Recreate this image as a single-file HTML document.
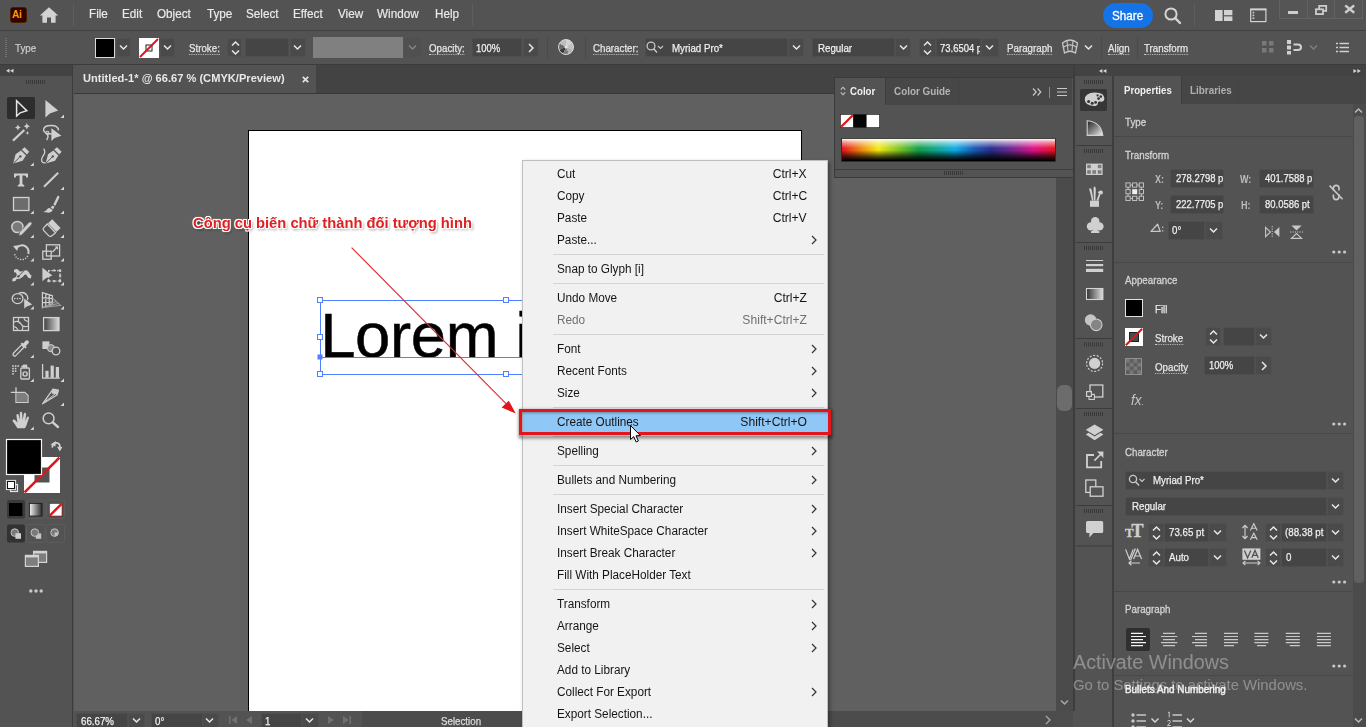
<!DOCTYPE html>
<html>
<head>
<meta charset="utf-8">
<title>Illustrator</title>
<style>
*{box-sizing:border-box;margin:0;padding:0}
html,body{width:1366px;height:727px;overflow:hidden;background:#535353;font-family:"Liberation Sans",sans-serif;font-size:11px;color:#dcdcdc}
.abs{position:absolute}
svg{display:block;overflow:visible}
#root{position:relative;width:1366px;height:727px;overflow:hidden;background:#535353}
.t{transform-origin:0 0;transform:scaleX(.885);display:inline-block}
.n{transform:scaleX(.86)}
/* menu bar */
#menubar{left:0;top:0;width:1366px;height:30px;background:#535353}
#menubar .mi{position:absolute;top:6px;font-size:13px;color:#eaeaea;-webkit-text-stroke:.2px #eaeaea;line-height:16px;white-space:nowrap;transform-origin:0 0;transform:scaleX(.9)}
/* control bar */
#ctrl{left:0;top:30px;width:1366px;height:35px;background:#535353;border-top:1px solid #404040;border-bottom:1px solid #3c3c3c}
.lbl{position:absolute;font-size:11px;color:#e6e6e6;white-space:nowrap;line-height:13px;-webkit-text-stroke:.25px #e6e6e6}
.ul{border-bottom:1px dotted #c8c8c8;line-height:12px}
.fld{position:absolute;background:#454545;border:1px solid #4d4d4d;border-radius:2px}
.fld span{position:absolute;left:5px;top:3px;font-size:11px;color:#f0f0f0;line-height:13px;white-space:nowrap;-webkit-text-stroke:.25px #f0f0f0}
.pf span{top:1.6px}
.dd{background:#4a4a4a;border:1px solid #505050;border-radius:2px}
.chev{width:9px;height:7px}
.vsep{width:1px;height:24px;background:#4b4b4b}
.hs{left:1114px;width:239px;height:1px;background:#484848}
.sec{color:#d4d4d4;-webkit-text-stroke:.3px #d4d4d4}
.b{font-weight:bold;color:#bdbdbd;-webkit-text-stroke:0;transform:scaleX(.82)}
.dots{width:15px;height:4px}
/* tab bar */
#tabbar{left:74px;top:65px;width:1001px;height:29px;background:#434343;border-bottom:1px solid #383838}
#tab{left:74px;top:65px;width:242px;height:28px;background:#535353}
/* tools */
#tools{left:0;top:65px;width:73px;height:662px;background:#535353;border-right:1px solid #3c3c3c}
#toolshdr{left:0;top:65px;width:72px;height:11px;background:#434343}
/* canvas */
#canvas{left:74px;top:94px;width:982px;height:617px;background:#606060}
#artboard{left:248px;top:130px;width:554px;height:581px;background:#fff;border:1px solid #000;border-bottom:none}
/* scrollbars */
#vscroll{left:1056px;top:94px;width:17px;height:617px;background:#4b4b4b}
#hbar{left:74px;top:711px;width:1001px;height:16px;background:#535353}
/* dock */
#dockhdr{left:1075px;top:65px;width:291px;height:11px;background:#434343}
#dock{left:1075px;top:76px;width:37px;height:651px;background:#535353}
/* properties */
#props{left:1114px;top:76px;width:252px;height:651px;background:#535353}
/* color panel */
#colorp{left:834px;top:77px;width:240px;height:101px;background:#535353;border:1px solid #3a3a3a}
/* context menu */
#ctx{left:522px;top:160px;width:306px;height:567px;background:#f1f1f1;border:1px solid #bfbfbf;border-bottom:none;box-shadow:2px 2px 4px rgba(0,0,0,.35)}
.ci{position:absolute;font-size:12px;color:#111;line-height:16px;white-space:nowrap;transform-origin:0 0;transform:scaleX(.98)}
.cs{position:absolute;font-size:12px;color:#111;line-height:16px;white-space:nowrap;transform-origin:100% 0;transform:scaleX(1.01)}
.sep{position:absolute;left:30px;right:3px;height:1px;background:#d0d0d0}
</style>
</head>
<body>
<svg width="0" height="0" style="position:absolute">
<defs>
<path id="chv" d="M1 1.5 L4.5 5 L8 1.5" fill="none" stroke="#e8e8e8" stroke-width="1.5"/>
<g id="dots" fill="#c8c8c8"><circle cx="1.8" cy="2" r="1.6"/><circle cx="7.2" cy="2" r="1.6"/><circle cx="12.6" cy="2" r="1.6"/></g>
<path id="chu" d="M1 5.5 L4.5 2 L8 5.5" fill="none" stroke="#e8e8e8" stroke-width="1.5"/>
</defs>
</svg>
<div id="root">
<div id="menubar" class="abs">
  <div class="abs" style="left:10px;top:7px;width:17px;height:16px;background:#330000;border-radius:3px;border:1px solid #4a1c00"></div>
  <div class="abs" style="left:12px;top:9px;font-size:10px;font-weight:bold;color:#ff9a00;line-height:12px;letter-spacing:-0.3px">Ai</div>
  <svg class="abs" style="left:39px;top:6px" width="20" height="18" viewBox="0 0 20 18"><path d="M10 1.2 L0.8 9.4 H3.4 V16.8 H8 V11.4 H12 V16.8 H16.6 V9.4 H19.2 Z" fill="#d2d2d2"/></svg>
  <div class="abs" style="left:73px;top:4px;width:1px;height:22px;background:#5e5e5e"></div>
  <span class="mi" style="left:89px">File</span>
  <span class="mi" style="left:122px">Edit</span>
  <span class="mi" style="left:157px">Object</span>
  <span class="mi" style="left:207px">Type</span>
  <span class="mi" style="left:246px">Select</span>
  <span class="mi" style="left:293px">Effect</span>
  <span class="mi" style="left:338px">View</span>
  <span class="mi" style="left:377px">Window</span>
  <span class="mi" style="left:435px">Help</span>
  <div class="abs" style="left:472px;top:4px;width:1px;height:22px;background:#5e5e5e"></div>
  <!-- share -->
  <div class="abs" style="left:1103px;top:3px;width:50px;height:25px;border-radius:13px;background:#1473e6"></div>
  <span class="abs" style="left:1112px;top:7.6px;font-size:13px;color:#fff;line-height:16px;transform-origin:0 0;transform:scaleX(.9);-webkit-text-stroke:.3px #fff">Share</span>
  <svg class="abs" style="left:1163px;top:6px" width="20" height="20" viewBox="0 0 20 20"><circle cx="8" cy="8" r="5.6" fill="none" stroke="#d4d4d4" stroke-width="2"/><path d="M12.2 12.2 L17 17" stroke="#d4d4d4" stroke-width="2.4" stroke-linecap="round"/></svg>
  <div class="abs" style="left:1194px;top:4px;width:1px;height:22px;background:#5e5e5e"></div>
  <!-- workspace icon -->
  <svg class="abs" style="left:1215px;top:10px" width="18" height="12" viewBox="0 0 18 12"><rect x="0" y="0" width="7.6" height="11" fill="#d2d2d2"/><rect x="9" y="0" width="8.4" height="5.2" fill="#d2d2d2"/><rect x="9" y="6.4" width="8.4" height="4.6" fill="#d2d2d2"/></svg>
  <svg class="abs" style="left:1250px;top:8px" width="17" height="15" viewBox="0 0 17 15"><rect x="0.7" y="1.2" width="15.2" height="12.4" fill="none" stroke="#d2d2d2" stroke-width="1.2"/><rect x="0.2" y="0.6" width="16.2" height="1.8" fill="#d2d2d2"/><rect x="2.6" y="3.8" width="1.6" height="1.6" fill="#d2d2d2"/><rect x="2.6" y="6.6" width="1.6" height="1.6" fill="#d2d2d2"/><rect x="2.6" y="9.4" width="1.6" height="1.6" fill="#d2d2d2"/></svg>
  <!-- window controls -->
  <div class="abs" style="left:1279px;top:-1px;width:84px;height:20px;border:1px solid #626262;background:#555"></div>
  <div class="abs" style="left:1307px;top:0;width:1px;height:18px;background:#626262"></div>
  <div class="abs" style="left:1334px;top:0;width:1px;height:18px;background:#626262"></div>
  <div class="abs" style="left:1288px;top:10.5px;width:10.4px;height:3.5px;background:#cdcdcd"></div>
  <svg class="abs" style="left:1314px;top:4px" width="14" height="12" viewBox="0 0 14 12"><rect x="5.2" y="1.9" width="7" height="5" fill="none" stroke="#cdcdcd" stroke-width="1.8"/><rect x="2" y="5.3" width="7" height="4.8" fill="#555" stroke="#cdcdcd" stroke-width="1.8"/></svg>
  <svg class="abs" style="left:1344px;top:4px" width="12" height="10" viewBox="0 0 12 10"><path d="M1.2 1.4 L10.2 8.8 M10.2 1.4 L1.2 8.8" stroke="#cdcdcd" stroke-width="2.5"/></svg>
</div>
<div id="ctrl" class="abs">
  <!-- coords relative to ctrl top=30 (border 1px included) ; use inner wrapper offset -->
  <div class="abs" style="left:0;top:-31px;width:1366px;height:0">
  <div class="abs" style="left:5px;top:38px;width:2px;height:19px;background:repeating-linear-gradient(#707070 0 1px,transparent 1px 2px)"></div>
  <span class="lbl t" style="left:15px;top:42px;color:#cfcfcf;-webkit-text-stroke:.2px #cfcfcf">Type</span>
  <!-- fill swatch -->
  <div class="abs" style="left:95px;top:38px;width:20px;height:20px;background:#000;border:1px solid #d8d8d8"></div>
  <div class="abs dd" style="left:116px;top:38px;width:15px;height:19px"></div>
  <svg class="abs chev" style="left:119px;top:44px"><use href="#chv"/></svg>
  <!-- stroke swatch -->
  <svg class="abs" style="left:139px;top:38px" width="20" height="20" viewBox="0 0 20 20"><rect x="0" y="0" width="20" height="20" fill="#fff"/><rect x="7" y="7" width="6" height="6" fill="none" stroke="#222" stroke-width="1"/><path d="M1 19 L19 1" stroke="#e0121a" stroke-width="2"/></svg>
  <div class="abs dd" style="left:160px;top:38px;width:15px;height:19px"></div>
  <svg class="abs chev" style="left:163px;top:44px"><use href="#chv"/></svg>
  <span class="lbl t ul" style="left:189px;top:42px">Stroke:</span>
  <div class="abs dd" style="left:227px;top:38px;width:15px;height:19px"></div>
  <svg class="abs chev" style="left:231px;top:40px"><use href="#chu"/></svg>
  <svg class="abs chev" style="left:231px;top:49px"><use href="#chv"/></svg>
  <div class="fld" style="left:245px;top:38px;width:44px;height:19px"></div>
  <div class="abs dd" style="left:290px;top:38px;width:16px;height:19px"></div>
  <svg class="abs chev" style="left:293px;top:44px"><use href="#chv"/></svg>
  <div class="abs" style="left:313px;top:37px;width:90px;height:21px;background:#808080"></div>
  <div class="abs dd" style="left:404px;top:38px;width:17px;height:19px;background:#505050"></div>
  <svg class="abs chev" style="left:408px;top:44px;opacity:.35"><use href="#chv"/></svg>
  <span class="lbl t ul" style="left:429px;top:42px">Opacity:</span>
  <div class="fld" style="left:472px;top:38px;width:50px;height:19px"><span class="t n" style="left:3px">100%</span></div>
  <div class="abs dd" style="left:523px;top:38px;width:16px;height:19px"></div>
  <svg class="abs" style="left:527px;top:43px" width="8" height="10" viewBox="0 0 8 10"><path d="M2 1 L6 5 L2 9" fill="none" stroke="#e6e6e6" stroke-width="1.5"/></svg>
  <div class="abs vsep" style="left:547px;top:36px"></div>
  <!-- recolor wheel -->
  <div class="abs" style="left:557.6px;top:38.8px;width:16.6px;height:16.6px;border-radius:50%;border:1px solid #dcdcdc;background:radial-gradient(circle,#e4e4e4 0 1.2px,rgba(228,228,228,0) 1.9px),conic-gradient(#d2d2d2 0deg 55deg,#c2c2c2 55deg 115deg,#b2b2b2 115deg 160deg,#7c7c7c 160deg 205deg,#3a3a3a 205deg 245deg,#6c6c6c 245deg 295deg,#bcbcbc 295deg 360deg)"></div>
  <div class="abs vsep" style="left:585px;top:36px"></div>
  <span class="lbl t ul" style="left:593px;top:42px">Character:</span>
  <div class="fld" style="left:645px;top:38px;width:143px;height:19px"><span class="t" style="left:26px">Myriad Pro*</span></div>
  <svg class="abs" style="left:646px;top:41px" width="20" height="14" viewBox="0 0 20 14"><circle cx="5" cy="5" r="3.9" fill="none" stroke="#c8c8c8" stroke-width="1.3"/><path d="M7.6 7.8 L11 11.5" stroke="#c8c8c8" stroke-width="1.5"/><path d="M12 5 L14.5 7.5 L17 5" fill="none" stroke="#c8c8c8" stroke-width="1.1"/></svg>
  <div class="abs dd" style="left:788px;top:38px;width:16px;height:19px"></div>
  <svg class="abs chev" style="left:792px;top:44px"><use href="#chv"/></svg>
  <div class="fld" style="left:812px;top:38px;width:83px;height:19px"><span class="t">Regular</span></div>
  <div class="abs dd" style="left:895px;top:38px;width:16px;height:19px"></div>
  <svg class="abs chev" style="left:899px;top:44px"><use href="#chv"/></svg>
  <div class="abs dd" style="left:919px;top:38px;width:17px;height:19px"></div>
  <svg class="abs chev" style="left:923px;top:40px"><use href="#chu"/></svg>
  <svg class="abs chev" style="left:923px;top:49px"><use href="#chv"/></svg>
  <div class="fld" style="left:936px;top:38px;width:45px;height:19px;overflow:hidden"><span class="t n" style="left:3px">73.6504 p</span></div>
  <div class="abs dd" style="left:981px;top:38px;width:18px;height:19px"></div>
  <svg class="abs chev" style="left:985px;top:44px"><use href="#chv"/></svg>
  <span class="lbl t ul" style="left:1007px;top:42px">Paragraph</span>
  <!-- envelope warp icon -->
  <svg class="abs" style="left:1061px;top:38px" width="18" height="18" viewBox="0 0 18 18"><path d="M1.5 5 Q9 -1 16.5 5 L14.5 15 Q9 11.5 3.5 15 Z" fill="none" stroke="#c8c8c8" stroke-width="1.3"/><path d="M6 2.8 L7 12.8 M12 2.8 L11 12.8 M2.3 9.3 Q9 4.5 15.7 9.3" fill="none" stroke="#c8c8c8" stroke-width="1.1"/></svg>
  <svg class="abs chev" style="left:1084px;top:44px"><use href="#chv"/></svg>
  <div class="abs vsep" style="left:1101px;top:36px"></div>
  <span class="lbl t ul" style="left:1108px;top:42px">Align</span>
  <div class="abs vsep" style="left:1137px;top:36px"></div>
  <span class="lbl t ul" style="left:1144px;top:42px">Transform</span>
  <!-- right icons -->
  <svg class="abs" style="left:1262px;top:41px" width="12" height="12" viewBox="0 0 12 12" opacity=".3"><rect x="0" y="0" width="4.5" height="4.5" fill="#d0d0d0"/><rect x="7" y="0" width="4.5" height="4.5" fill="#d0d0d0"/><rect x="0" y="7" width="4.5" height="4.5" fill="#d0d0d0"/><rect x="7" y="7" width="4.5" height="4.5" fill="#d0d0d0"/></svg>
  <svg class="abs" style="left:1287px;top:40px" width="16" height="15" viewBox="0 0 16 15"><rect x="0" y="0" width="4" height="4" fill="#d0d0d0"/><rect x="0" y="5.5" width="4" height="4" fill="#d0d0d0"/><rect x="0" y="11" width="4" height="3.5" fill="#d0d0d0"/><path d="M6.5 4.5 H11 Q14 4.5 14 7.2 Q14 10 11 10 H6.5" fill="none" stroke="#d0d0d0" stroke-width="2"/></svg>
  <svg class="abs chev" style="left:1309px;top:44px;opacity:.3"><use href="#chv"/></svg>
  <svg class="abs" style="left:1336px;top:42px" width="13" height="11" viewBox="0 0 13 11"><path d="M0 1.5 H2 M0 5.5 H2 M0 9.5 H2" stroke="#d0d0d0" stroke-width="1.6"/><path d="M3.5 1.5 H13 M3.5 5.5 H13 M3.5 9.5 H13" stroke="#d0d0d0" stroke-width="1.4"/></svg>
  </div>
</div>
<div id="tools" class="abs"></div>
<div id="toolshdr" class="abs"></div>
<svg class="abs" style="left:0;top:0" width="74" height="727" viewBox="0 0 74 727">
<g fill="#cfcfcf" stroke="none">
<!-- collapse arrows -->
<path d="M9.5 68.8 L6 70.8 L9.5 72.8 Z M13.5 68.8 L10 70.8 L13.5 72.8 Z" fill="#d6d6d6"/>
<!-- gripper -->
<g fill="#3a3a3a"><rect x="26" y="80" width="1" height="4"/><rect x="28" y="80" width="1" height="4"/><rect x="30" y="80" width="1" height="4"/><rect x="32" y="80" width="1" height="4"/><rect x="34" y="80" width="1" height="4"/><rect x="36" y="80" width="1" height="4"/><rect x="38" y="80" width="1" height="4"/><rect x="40" y="80" width="1" height="4"/><rect x="42" y="80" width="1" height="4"/><rect x="44" y="80" width="1" height="4"/></g>
<!-- sub-tool triangles -->
<g fill="#d8d8d8">
<path d="M64 114.5 V118 H60.5 Z"/>
<path d="M33.8 162.5 V166 H30.3 Z"/>
<path d="M33.8 186.5 V190 H30.3 Z"/><path d="M64 186.5 V190 H60.5 Z"/>
<path d="M33.8 210.5 V214 H30.3 Z"/><path d="M64 210.5 V214 H60.5 Z"/>
<path d="M33.8 234.5 V238 H30.3 Z"/><path d="M64 234.5 V238 H60.5 Z"/>
<path d="M33.8 258 V261.5 H30.3 Z"/><path d="M64 258 V261.5 H60.5 Z"/>
<path d="M33.8 282 V285.5 H30.3 Z"/><path d="M64 282 V285.5 H60.5 Z"/>
<path d="M33.8 306 V309.5 H30.3 Z"/><path d="M64 306 V309.5 H60.5 Z"/>
<path d="M33.8 354.5 V358 H30.3 Z"/>
<path d="M33.8 378.5 V382 H30.3 Z"/><path d="M64 378.5 V382 H60.5 Z"/>
<path d="M64 402.5 V406 H60.5 Z"/>
<path d="M33.8 426.5 V430 H30.3 Z"/>
</g>
<!-- R1: selection (active) + direct selection -->
<rect x="7" y="97" width="28" height="22" rx="2" fill="#2d2d2d"/>
<path d="M16.6 100.8 V116 L20.2 112.8 L26.8 110.6 Z" fill="#2d2d2d" stroke="#e6e6e6" stroke-width="1.5" stroke-linejoin="miter"/>
<path d="M45.4 100 V117.4 L49.8 113.4 L58.2 110.6 Z"/>
<!-- R2: magic wand + lasso -->
<path d="M13 140.6 L24.3 130" stroke="#cfcfcf" stroke-width="2.2" fill="none"/>
<path d="M17.9 124.6 l0.9 2 2 0.9 -2 0.9 -0.9 2 -0.9 -2 -2 -0.9 2 -0.9z"/>
<path d="M26.8 123 l1 2.2 2.2 1 -2.2 1 -1 2.2 -1 -2.2 -2.2 -1 2.2 -1z"/>
<path d="M27.4 131 l0.6 1.4 1.4 0.6 -1.4 0.6 -0.6 1.4 -0.6 -1.4 -1.4 -0.6 1.4 -0.6z"/>
<path d="M52 134 Q44 134 43.6 130 Q43.6 125.4 51 125.4 Q58.4 125.4 58.6 130.4" fill="none" stroke="#cfcfcf" stroke-width="1.5"/>
<path d="M46.5 133.5 Q49.5 136 46.6 140" fill="none" stroke="#cfcfcf" stroke-width="1.4"/>
<circle cx="47.3" cy="132.8" r="1.6" fill="none" stroke="#cfcfcf" stroke-width="1.1"/>
<path d="M51.4 128.2 V140.9 L54.6 138 L61.4 135.8 Z"/>
<!-- R3: pen + curvature -->
<g id="pen"><path d="M13.2 163.6 L15.6 154.2 L21 150.6 L26 155.4 L22.6 160.8 Z"/><path d="M21.8 149.6 L24.6 147.2 L29.2 151.8 L26.9 154.6 Z"/><path d="M13.6 163.2 L19.8 157" stroke="#535353" stroke-width="1" fill="none"/><circle cx="20.4" cy="156.4" r="1.2" fill="#535353"/></g>
<g transform="translate(32.4 0)"><path d="M13.2 163.6 L15.6 154.2 L21 150.6 L26 155.4 L22.6 160.8 Z"/><path d="M21.8 149.6 L24.6 147.2 L29.2 151.8 L26.9 154.6 Z"/><path d="M13.6 163.2 L19.8 157" stroke="#535353" stroke-width="1" fill="none"/><circle cx="20.4" cy="156.4" r="1.2" fill="#535353"/></g>
<path d="M43.6 148.6 Q46 152 43.4 155.4 Q40.4 159.6 42.4 162 Q43.6 163.4 45.6 162.6" fill="none" stroke="#cfcfcf" stroke-width="1.3"/>
<!-- R4: type + line -->
<path d="M14 173.6 H28 V177.4 H26.4 Q26.2 175.6 24.4 175.6 H22.4 V183.6 Q22.4 184.8 24.2 184.9 V186.4 H17.8 V184.9 Q19.6 184.8 19.6 183.6 V175.6 H17.6 Q15.8 175.6 15.6 177.4 H14 Z"/>
<path d="M44 186.8 L58.2 172.8" stroke="#cfcfcf" stroke-width="2" fill="none"/>
<!-- R5: rect + brush -->
<rect x="13.5" y="197.5" width="15.4" height="13" fill="#6c6c6c" stroke="#d2d2d2" stroke-width="1.3"/>
<path d="M53.4 204.6 L57.2 196.6 Q58 195.2 59 196 Q59.8 196.8 59 198.2 L55.2 206 Z"/>
<path d="M52.6 205.4 L54.6 206.8 L53.2 209.2 L50.6 207.6 Z"/>
<path d="M50 208.2 L52.8 210 Q51.6 213 47.6 212.6 L43.2 212 Q46.4 210.8 47.2 209.2 Q48.2 207.6 50 208.2 Z"/>
<!-- R6: shaper + eraser -->
<circle cx="17.4" cy="227" r="5.6" fill="#7a7a7a" stroke="#cfcfcf" stroke-width="1.5"/>
<path d="M18.6 236 L19.4 232.2 L29 222.2 Q30.4 221.2 31.6 222.4 Q32.6 223.6 31.4 225 L21.8 235 Z" stroke="#535353" stroke-width="0.8"/>
<path d="M52.2 219.2 L60.6 228 L56.4 232 L48 223.2 Z"/>
<path d="M47.2 224 L55.6 232.8 L51.6 236 Q50 237 48.6 235.6 L43.6 230.4 Q42.6 229 43.8 227.6 Z" fill="none" stroke="#cfcfcf" stroke-width="1.3"/>
<!-- R7: rotate + scale -->
<path d="M16.8 247.6 Q21 243.8 25.6 246.4 Q29.4 249 28.4 254" fill="none" stroke="#cfcfcf" stroke-width="2"/>
<path d="M13 246 L18.6 245.2 L17.2 251 Z"/>
<path d="M27.8 256 Q25 260.4 20 259.4 Q15.8 258.4 14.6 254" fill="none" stroke="#cfcfcf" stroke-width="1.4" stroke-dasharray="1.2 1.4"/>
<rect x="46.4" y="244.8" width="13.2" height="11.2" fill="none" stroke="#cfcfcf" stroke-width="1.3"/>
<rect x="42.8" y="251.2" width="8.4" height="8" fill="none" stroke="#cfcfcf" stroke-width="1.3"/>
<path d="M52.4 252 L57.6 246.8" stroke="#cfcfcf" stroke-width="1.3" fill="none"/><path d="M54.6 246.4 H58 V249.8 Z"/>
<!-- R8: warp + free transform -->
<path d="M14 270 Q17 267.6 19 270.4 Q20 272.6 23.6 270.8 Q27 269 29 272.4 Q30.6 275.6 31.6 275.2 L30.8 278.4 Q28 278.6 27 276 Q26 273.6 24.2 275.2 Q20.4 279.8 16.8 278.8 L15.4 281 L12.2 281.4 L12.6 278.4 L15 277.6 Q17.4 276 16.4 273.6 Q15.6 271.4 14 272.6 Z"/>
<path d="M17.6 277.2 L24 270.6" stroke="#535353" stroke-width="1" fill="none"/><circle cx="18.4" cy="276.4" r="1.2" fill="#535353"/>
<path d="M42.4 267.8 V281.2 L45.8 278.2 L52.4 275.6 Z"/>
<rect x="48.6" y="270.6" width="11.4" height="10.4" fill="none" stroke="#cfcfcf" stroke-width="1.2" stroke-dasharray="1.6 1.2"/>
<rect x="58.8" y="269.4" width="2.4" height="2.4"/><rect x="58.8" y="279.8" width="2.4" height="2.4"/><rect x="47.4" y="279.8" width="2.4" height="2.4"/><rect x="53.2" y="269.4" width="2" height="2"/><rect x="59.2" y="274.6" width="2" height="2"/><rect x="53.2" y="280.2" width="2" height="2"/>
<!-- R9: shape builder + perspective -->
<ellipse cx="17.6" cy="298.6" rx="5.4" ry="5" fill="none" stroke="#cfcfcf" stroke-width="1.3"/>
<path d="M18.8 293.2 Q24 291 27 295.4 Q28.4 298 27.4 300" fill="none" stroke="#cfcfcf" stroke-width="1.3"/>
<circle cx="14.8" cy="298.6" r="0.8"/><circle cx="17.4" cy="298.6" r="0.8"/><circle cx="20" cy="298.6" r="0.8"/>
<path d="M24.2 298.6 V308.6 L26.8 306.4 L32.2 304.6 Z"/>
<path d="M42.4 292.6 L52.4 295.6 V304.6 L42.4 307.6 Z M45.8 293.6 V306.6 M49.2 294.6 V305.6 M42.4 297.6 L52.4 298.6 M42.4 302.6 L52.4 301.8" fill="none" stroke="#cfcfcf" stroke-width="1.2"/>
<path d="M42.4 307.6 L60.6 305.4 L52.4 298 M46 306 L58 303.6 M50 304 L56 301.6" fill="none" stroke="#9a9a9a" stroke-width="1.1"/>
<!-- R10: mesh + gradient -->
<rect x="13.5" y="317.5" width="15" height="13" fill="none" stroke="#cfcfcf" stroke-width="1.3"/>
<path d="M13.5 322 Q19 320 21 324 Q23 328 28.5 326 M19 317.5 Q17 322 21 324 Q24 326 22 330.5 M13.5 326.5 Q17 327 18 330.5 M24 317.5 Q24 321 28.5 321.5" fill="none" stroke="#cfcfcf" stroke-width="1.1"/>
<linearGradient id="tg" x1="0" x2="1" y1="0" y2="0"><stop offset="0" stop-color="#3c3c3c"/><stop offset="1" stop-color="#dcdcdc"/></linearGradient>
<rect x="43.6" y="317.6" width="15.4" height="13" fill="url(#tg)" stroke="#d2d2d2" stroke-width="1.3"/>
<!-- R11: eyedropper + blend -->
<path d="M13.4 355.6 Q12.4 354.4 13.6 353 L21.6 344.8 L24 347.2 L16 355.4 Q14.6 356.6 13.4 355.6 Z" fill="none" stroke="#cfcfcf" stroke-width="1.3"/>
<path d="M20.6 343.8 L22 342.4 L23.2 343.4 L25.6 340.8 Q27.2 339.6 28.4 340.8 Q29.4 342 28.4 343.4 L25.8 346 L26.8 347.2 L25.4 348.6 Z"/>
<rect x="42.4" y="341.4" width="7" height="7.6"/>
<circle cx="51" cy="348.2" r="3.6" fill="#8a8a8a" stroke="#cfcfcf" stroke-width="1"/>
<circle cx="56" cy="351" r="3.8" fill="#535353" stroke="#cfcfcf" stroke-width="1.3"/>
<!-- R12: symbol sprayer + graph -->
<rect x="20.8" y="368" width="8.6" height="11" rx="1" fill="none" stroke="#cfcfcf" stroke-width="1.3"/>
<circle cx="25.1" cy="374" r="2.1" fill="none" stroke="#cfcfcf" stroke-width="1.4"/>
<rect x="23" y="364.6" width="4.2" height="3"/><rect x="21.4" y="365.6" width="2" height="1.4"/>
<g><rect x="12.2" y="365.2" width="1.6" height="1.6"/><rect x="14.8" y="365.2" width="1.6" height="1.6"/><rect x="17.4" y="365.2" width="1.6" height="1.6"/><rect x="12.2" y="367.8" width="1.6" height="1.6"/><rect x="14.8" y="367.8" width="1.6" height="1.6"/><rect x="12.2" y="370.4" width="1.6" height="1.6"/><rect x="14.8" y="370.4" width="1.6" height="1.6"/><rect x="12.2" y="373" width="1.6" height="1.6"/></g>
<path d="M42.6 364 V378.2 H59.8" fill="none" stroke="#cfcfcf" stroke-width="1.3"/>
<rect x="45.4" y="370.8" width="3.2" height="7"/><rect x="50.6" y="365.6" width="3.2" height="12.2"/><rect x="55.8" y="367" width="3.2" height="10.8"/>
<!-- R13: artboard + slice -->
<path d="M16 387.2 V402.4 H28 V395.6 L24.8 392.4 H10.8" fill="none" stroke="#cfcfcf" stroke-width="1.3"/>
<path d="M16.7 393.1 H24.4 L27.3 396 V401.7 H16.7 Z" fill="#7e7e7e"/>
<path d="M42.6 403.8 L53 389.2 L58.4 390.2 L57 395 Z" fill="none" stroke="#cfcfcf" stroke-width="1.3" stroke-linejoin="round"/>
<path d="M52.4 390 L58.2 390.2 L57 394.6 L51.6 393.4 Z"/>
<path d="M43.6 402.8 L55 394" stroke="#cfcfcf" stroke-width="1" fill="none"/>
<!-- R14: hand + zoom -->
<path d="M17.4 428.2 Q15.4 425 12.8 421.6 Q12 420 13.4 419.6 Q14.8 419.4 16 421 L17.4 422.6 L16.4 415.4 Q16.4 414 17.4 414 Q18.4 414 18.8 415.2 L19.8 420 L19.8 413 Q19.9 411.8 21 411.8 Q22.1 411.8 22.2 413 L22.6 420 L23.8 413.8 Q24.2 412.6 25.2 412.8 Q26.2 413 26.1 414.4 L25.4 421 L27 417.2 Q27.6 416.2 28.4 416.6 Q29.2 417 28.8 418.4 L26.6 425 Q26 427.4 24.6 428.2 Z"/>
<circle cx="48.6" cy="418.4" r="5.4" fill="none" stroke="#cfcfcf" stroke-width="1.5"/>
<path d="M52.8 422.4 L58 427" stroke="#cfcfcf" stroke-width="2.4" stroke-linecap="round" fill="none"/>
<!-- fill/stroke -->
<rect x="24" y="457" width="36" height="36" fill="#fff"/>
<rect x="34.5" y="467.5" width="15" height="15" fill="#535353"/>
<path d="M24.6 492.4 L59.4 457.6" stroke="#e0141a" stroke-width="2.6" fill="none"/>
<rect x="6.5" y="439.5" width="35" height="35" fill="#000" stroke="#f4f4f4" stroke-width="1.2"/>
<path d="M52.4 447.6 Q52 442.6 56.6 442.8 Q60 443.2 60 447.4" fill="none" stroke="#cfcfcf" stroke-width="1.8"/>
<path d="M50.6 444.6 L56 441 L55.4 446.6 Z M57 446.8 L62.4 447 L59.8 451.4 Z"/>
<rect x="10.5" y="484.5" width="7" height="7" fill="#535353" stroke="#e8e8e8" stroke-width="1.2"/>
<rect x="7.5" y="481.5" width="7" height="7" fill="#fff" stroke="#111" stroke-width="1"/>
<rect x="6.4" y="480.4" width="9.2" height="9.2" fill="none" stroke="#e8e8e8" stroke-width="1"/>
<!-- color / gradient / none -->
<rect x="7" y="500" width="18" height="18.5" rx="2" fill="#3a3a3a"/>
<rect x="9" y="503" width="13.4" height="13" fill="#000"/>
<rect x="27" y="500" width="18" height="18.5" rx="2" fill="none" stroke="#5c5c5c" stroke-width="1"/>
<linearGradient id="tg2" x1="0" x2="1" y1="0" y2="0"><stop offset="0" stop-color="#f4f4f4"/><stop offset="1" stop-color="#2a2a2a"/></linearGradient>
<rect x="29.4" y="503.4" width="12.6" height="12.6" fill="url(#tg2)" stroke="#1a1a1a" stroke-width="0.8"/>
<rect x="46.5" y="500" width="18" height="18.5" rx="2" fill="none" stroke="#5c5c5c" stroke-width="1"/>
<rect x="49.4" y="503.4" width="12.6" height="12.6" fill="#fff" stroke="#a00" stroke-width="0.6"/>
<path d="M49.8 515.6 L61.6 503.8" stroke="#e0141a" stroke-width="2.4" fill="none"/>
<!-- draw modes -->
<rect x="7" y="524.5" width="18" height="18" rx="2" fill="#323232"/>
<rect x="26.5" y="524.5" width="18.5" height="18" rx="2" fill="none" stroke="#5c5c5c" stroke-width="1"/>
<rect x="46" y="524.5" width="18.5" height="18" rx="2" fill="none" stroke="#5c5c5c" stroke-width="1"/>
<circle cx="14.8" cy="532.6" r="3.8" fill="#7a7a7a" stroke="#c4c4c4" stroke-width="1"/><rect x="15.4" y="533.2" width="5.6" height="5.6" fill="#cfcfcf"/>
<rect x="35.8" y="533.4" width="5.4" height="5.4" fill="#c4c4c4"/><circle cx="34.8" cy="532.6" r="3.8" fill="#7a7a7a" stroke="#c4c4c4" stroke-width="1"/>
<circle cx="54.6" cy="532.6" r="3.8" fill="#7a7a7a" stroke="#c4c4c4" stroke-width="1"/><path d="M54.6 532.6 H58.4 A3.8 3.8 0 0 1 54.6 536.4 Z" fill="#c4c4c4"/>
<!-- screen mode -->
<rect x="33.6" y="551.4" width="13" height="11" fill="#7e7e7e" stroke="#d4d4d4" stroke-width="1.2"/><rect x="33.6" y="551.4" width="13" height="2" fill="#d4d4d4"/>
<rect x="25.4" y="555.4" width="13" height="11" fill="#7e7e7e" stroke="#d4d4d4" stroke-width="1.2"/><rect x="25.4" y="555.4" width="13" height="2" fill="#d4d4d4"/>
<!-- dots -->
<circle cx="30.8" cy="591" r="1.7" fill="#c8c8c8"/><circle cx="36" cy="591" r="1.7" fill="#c8c8c8"/><circle cx="41.2" cy="591" r="1.7" fill="#c8c8c8"/>
</g>
</svg>
<div id="tabbar" class="abs"></div>
<div id="tab" class="abs"></div>
<span class="abs" id="tabtxt" style="left:83px;top:72px;font-size:11px;font-weight:bold;color:#e8e8e8;line-height:13px;white-space:nowrap;transform-origin:0 0;transform:scaleX(1.01)">Untitled-1* @ 66.67 % (CMYK/Preview)</span>
<svg class="abs" style="left:302px;top:76px" width="7" height="7" viewBox="0 0 7 7"><path d="M0.8 0.8 L6.2 6.2 M6.2 0.8 L0.8 6.2" stroke="#e2e2e2" stroke-width="1.7"/></svg>
<div id="canvas" class="abs"></div>
<div id="artboard" class="abs"></div>
<!-- lorem text -->
<span class="abs" id="lorem" style="left:320.2px;top:298.7px;font-size:63.4px;line-height:72px;color:#000;white-space:nowrap;letter-spacing:-0.35px;-webkit-text-stroke:.5px #000">Lorem i</span>
<svg class="abs" style="left:0;top:0" width="1366" height="727" viewBox="0 0 1366 727">
<g fill="none" stroke="#4f80ff" stroke-width="1">
<path d="M320 300.5 H700 M320 374.5 H700 M320.5 300 V374 M320 357.5 H700"/>
<g fill="#fff"><rect x="317.5" y="297.5" width="5" height="5"/><rect x="503.5" y="297.5" width="5" height="5"/><rect x="317.5" y="371.5" width="5" height="5"/><rect x="503.5" y="371.5" width="5" height="5"/><rect x="317.5" y="334.5" width="5" height="5"/></g>
<rect x="318" y="355" width="4" height="4" fill="#4f80ff"/>
</g>
</svg>
<!-- scrollbars -->
<div id="vscroll" class="abs"></div>
<div class="abs" style="left:1057px;top:385px;width:15px;height:26px;border-radius:6px;background:#6c6c6c"></div>
<svg class="abs chev" style="left:1060px;top:699px;opacity:.6"><use href="#chv"/></svg>
<div class="abs" style="left:1073px;top:65px;width:2px;height:662px;background:#3c3c3c"></div>
<div id="hbar" class="abs"></div>
<div class="abs" style="left:362px;top:711px;width:694px;height:16px;background:#4c4c4c"></div>
<div class="abs" style="left:1056px;top:711px;width:17px;height:16px;background:#4d4d4d"></div>
<svg class="abs" style="left:1045px;top:715px;opacity:.6" width="6" height="10" viewBox="0 0 6 10"><path d="M1 1 L5 5 L1 9" fill="none" stroke="#e0e0e0" stroke-width="1.4"/></svg>
<!-- status bar -->
<div class="fld" style="left:76px;top:713px;width:52px;height:15px;border-radius:0"><span class="t" style="left:4px;top:1px">66.67%</span></div>
<div class="abs dd" style="left:128px;top:713px;width:17px;height:15px"></div>
<svg class="abs chev" style="left:132px;top:717px"><use href="#chv"/></svg>
<div class="fld" style="left:151px;top:713px;width:52px;height:15px;border-radius:0"><span class="t" style="left:3px;top:1px">0°</span></div>
<div class="abs dd" style="left:202px;top:713px;width:17px;height:15px"></div>
<svg class="abs chev" style="left:205px;top:717px"><use href="#chv"/></svg>
<svg class="abs" style="left:228px;top:715px" width="130" height="10" viewBox="0 0 130 10"><g fill="#707070"><rect x="1" y="1" width="1.6" height="8"/><path d="M9 1 V9 L3.4 5 Z"/><path d="M24 1 V9 L18 5 Z"/><path d="M100 1 V9 L106 5 Z"/><path d="M115 1 V9 L120.6 5 Z"/><rect x="121.4" y="1" width="1.6" height="8"/></g></svg>
<div class="fld" style="left:261px;top:713px;width:41px;height:15px;border-radius:0"><span class="t" style="left:3px;top:1px">1</span></div>
<div class="abs dd" style="left:302px;top:713px;width:17px;height:15px"></div>
<svg class="abs chev" style="left:305px;top:717px"><use href="#chv"/></svg>
<span class="lbl t" style="left:441px;top:715px;color:#d0d0d0">Selection</span>
<!-- color panel -->
<div id="colorp" class="abs"></div>
<div class="abs" style="left:885px;top:78px;width:187px;height:27px;background:#474747"></div>
<div class="abs" style="left:885px;top:78px;width:1px;height:27px;background:#3e3e3e"></div>
<div class="abs" style="left:958px;top:78px;width:1px;height:26px;background:#424242"></div>
<svg class="abs" style="left:840px;top:86px" width="6" height="10" viewBox="0 0 6 10"><path d="M0.8 3.6 L3 1.2 L5.2 3.6 M0.8 6.4 L3 8.8 L5.2 6.4" fill="none" stroke="#c8c8c8" stroke-width="1.1"/></svg>
<span class="abs" style="left:850px;top:84.6px;font-size:10.4px;font-weight:bold;color:#f0f0f0;line-height:13px;white-space:nowrap;transform-origin:0 0;transform:scaleX(0.93)">Color</span>
<span class="abs" style="left:894px;top:84.6px;font-size:10.4px;font-weight:bold;color:#b4b4b4;line-height:13px;white-space:nowrap;transform-origin:0 0;transform:scaleX(0.95)">Color Guide</span>
<svg class="abs" style="left:1032px;top:87px" width="36" height="10" viewBox="0 0 36 10"><path d="M1 1.5 L4.2 5 L1 8.5 M5.6 1.5 L8.8 5 L5.6 8.5" fill="none" stroke="#c8c8c8" stroke-width="1.2"/><path d="M17.5 0 V11" stroke="#8a8a8a" stroke-width="1"/><path d="M25 1.5 H35 M25 5 H35 M25 8.5 H35" stroke="#c8c8c8" stroke-width="1.2"/></svg>
<!-- swatches -->
<svg class="abs" style="left:840px;top:114px" width="40" height="14" viewBox="0 0 40 14"><rect x="0" y="0" width="40" height="14" fill="#2c2c2c"/><rect x="0.8" y="0.8" width="12.4" height="12.4" fill="#fff"/><path d="M1.2 12.8 L12.8 1.2" stroke="#e0141a" stroke-width="2.3"/><rect x="13.4" y="0.8" width="13" height="12.4" fill="#050505"/><rect x="26.6" y="0.8" width="12.6" height="12.4" fill="#fff"/></svg>
<!-- spectrum -->
<div class="abs" style="left:841px;top:138px;width:215px;height:24px;background:linear-gradient(to bottom,rgba(255,255,255,.95) 0%,rgba(255,255,255,.55) 14%,rgba(255,255,255,0) 42%,rgba(0,0,0,0) 50%,rgba(0,0,0,.65) 78%,#000 97%),linear-gradient(to right,#e8141c 0%,#f08a12 9%,#f4ea16 17%,#7cc426 27%,#14a04a 36%,#12a8a0 46%,#10aee8 53%,#1a5cb8 62%,#2a2e8e 70%,#6a2a90 79%,#e0128a 90%,#e8141c 100%);border:1px solid #2e2e2e;border-top-color:#444"></div>
<!-- bottom strip -->
<div class="abs" style="left:835px;top:169px;width:238px;height:1px;background:#3e3e3e"></div>
<div class="abs" style="left:944px;top:171px;width:19px;height:4px;background:repeating-linear-gradient(to right,#3a3a3a 0 1px,transparent 1px 2px)"></div>
<!-- dock -->
<div id="dockhdr" class="abs"></div>
<div id="dock" class="abs"></div>
<div class="abs" style="left:1112px;top:76px;width:2px;height:651px;background:#3e3e3e"></div>
<svg class="abs" style="left:0;top:0" width="1366" height="727" viewBox="0 0 1366 727">
<g fill="#d0d0d0">
<path d="M1102.4 69 L1099 71 L1102.4 73 Z M1106.4 69 L1103 71 L1106.4 73 Z" fill="#d6d6d6"/>
<path d="M1353.4 69 L1356.8 71 L1353.4 73 Z M1357.4 69 L1360.8 71 L1357.4 73 Z" fill="#d6d6d6"/>
<!-- grippers -->
<g fill="#393939" id="grp"><rect x="1084" y="80" width="1" height="4"/><rect x="1086" y="80" width="1" height="4"/><rect x="1088" y="80" width="1" height="4"/><rect x="1090" y="80" width="1" height="4"/><rect x="1092" y="80" width="1" height="4"/><rect x="1094" y="80" width="1" height="4"/><rect x="1096" y="80" width="1" height="4"/><rect x="1098" y="80" width="1" height="4"/><rect x="1100" y="80" width="1" height="4"/><rect x="1102" y="80" width="1" height="4"/></g>
<use href="#grp" y="69"/><use href="#grp" y="166"/><use href="#grp" y="262.5"/><use href="#grp" y="332"/><use href="#grp" y="429"/>
<!-- separators -->
<g fill="#3c3c3c"><rect x="1076" y="145" width="36" height="1"/><rect x="1076" y="242" width="36" height="1"/><rect x="1076" y="338" width="36" height="1"/><rect x="1076" y="408" width="36" height="1"/><rect x="1076" y="505" width="36" height="1"/><rect x="1076" y="545.5" width="36" height="1"/></g>
<!-- color (active) -->
<rect x="1080" y="89" width="27" height="22" rx="1.5" fill="#363636"/>
<path d="M1094.6 92.6 Q1104.4 92.4 1104.4 98.6 Q1104.4 102.2 1100.4 101.6 Q1097.6 101.2 1097.8 103.2 Q1098 106 1093.6 106 Q1084.8 105.6 1084.8 99.6 Q1085 93 1094.6 92.6 Z"/>
<g fill="#363636"><circle cx="1088.6" cy="101.4" r="1.5"/><circle cx="1092.2" cy="103.2" r="1.5"/><circle cx="1095.6" cy="102.4" r="1.4"/><circle cx="1098.6" cy="98.6" r="1.4"/><circle cx="1100.8" cy="96.6" r="1.3"/><circle cx="1097.6" cy="95.4" r="1.1"/></g>
<!-- color guide -->
<linearGradient id="cgd" x1="0" y1="0" x2="1" y2="1"><stop offset="0" stop-color="#202020"/><stop offset=".55" stop-color="#8c8c8c"/><stop offset="1" stop-color="#f0f0f0"/></linearGradient>
<path d="M1087.2 120.8 Q1101 122 1102.8 135.4 H1087.2 Z" fill="url(#cgd)" stroke="#d0d0d0" stroke-width="1.1"/>
<!-- swatches -->
<rect x="1086" y="163.6" width="16.6" height="11.4" fill="#cfcfcf"/>
<g fill="#7c7c7c"><rect x="1087.2" y="164.8" width="3.6" height="3.4"/><rect x="1097.8" y="164.8" width="3.6" height="3.4"/><rect x="1087.2" y="170.2" width="3.6" height="3.6"/><rect x="1092.4" y="170.2" width="3.6" height="3.6"/><rect x="1097.8" y="170.2" width="3.6" height="3.6"/></g>
<!-- brushes -->
<rect x="1090" y="200.6" width="9" height="6.2"/>
<path d="M1092 200.6 L1090 192 Q1088.6 188.6 1090 188 Q1091.6 188.4 1092 191.6 L1093.4 200.6 Z"/>
<path d="M1093.8 200.6 L1093.6 190.4 Q1093.2 186.8 1094.6 186.6 Q1096 187 1095.8 190.6 L1095.4 200.6 Z"/>
<path d="M1096.4 200.6 L1099 193.6 L1097.8 192.4 Q1099.4 189.8 1102 190.8 Q1103.8 192.2 1102 194.6 L1100.6 194 L1098.4 200.6 Z"/>
<!-- symbols (club) -->
<circle cx="1095.2" cy="221.2" r="4.2"/><circle cx="1091" cy="226.4" r="4.2"/><circle cx="1099.4" cy="226.4" r="4.2"/>
<path d="M1094.4 225 H1096 Q1096 230.6 1099.4 231.6 V233 H1091 V231.6 Q1094.4 230.6 1094.4 225 Z"/>
<!-- stroke -->
<rect x="1086" y="260" width="17.2" height="1"/><rect x="1086" y="264" width="17.2" height="2.2"/><rect x="1086" y="268.8" width="17.2" height="3.2"/>
<!-- gradient -->
<linearGradient id="dg" x1="0" x2="1" y1="0" y2="0"><stop offset="0" stop-color="#303030"/><stop offset="1" stop-color="#e0e0e0"/></linearGradient>
<rect x="1086.5" y="288.5" width="16.4" height="11" fill="url(#dg)" stroke="#d4d4d4" stroke-width="1.1"/>
<!-- transparency -->
<circle cx="1090.6" cy="320" r="5.8" fill="#c4c4c4"/>
<circle cx="1096.2" cy="324.8" r="5.8" fill="#858585" stroke="#cfcfcf" stroke-width="1.1"/>
<!-- appearance -->
<circle cx="1094.6" cy="363.4" r="5.6"/>
<circle cx="1094.6" cy="363.4" r="8" fill="none" stroke="#cfcfcf" stroke-width="1.2" stroke-dasharray="2 1.6"/>
<!-- graphic styles -->
<rect x="1090" y="385" width="12.8" height="12" fill="none" stroke="#d0d0d0" stroke-width="1.3"/>
<rect x="1089" y="394.4" width="5.4" height="5" fill="#535353" stroke="#d0d0d0" stroke-width="1.1"/>
<rect x="1086.6" y="391.6" width="4.8" height="4.8" fill="#535353" stroke="#d0d0d0" stroke-width="1.2"/>
<!-- layers -->
<path d="M1094.6 424.4 L1103.4 429.8 L1094.6 435.2 L1085.8 429.8 Z"/>
<path d="M1085.8 434.4 L1088.6 432.8 L1094.6 436.6 L1100.6 432.8 L1103.4 434.4 L1094.6 440.2 Z"/>
<!-- asset export -->
<path d="M1094 455 H1087 V467.4 H1101.2 V461" fill="none" stroke="#d0d0d0" stroke-width="1.8"/>
<path d="M1094.4 460.6 L1102 453" stroke="#d0d0d0" stroke-width="1.6" fill="none"/><path d="M1097 451.6 H1103.4 V458 Z"/>
<!-- artboards -->
<rect x="1085.8" y="480" width="10" height="12.4" fill="none" stroke="#d0d0d0" stroke-width="1.3"/>
<rect x="1090.2" y="486.8" width="12.8" height="9.4" fill="#535353" stroke="#d0d0d0" stroke-width="1.3"/>
<!-- comments -->
<path d="M1087.6 521 H1101.6 Q1103.2 521 1103.2 522.6 V531.4 Q1103.2 533 1101.6 533 H1093.4 L1089.4 537.6 V533 H1087.6 Q1086 533 1086 531.4 V522.6 Q1086 521 1087.6 521 Z"/>
</g>
</svg>
<div id="props" class="abs"></div>
<div class="abs" style="left:1114px;top:76px;width:252px;height:28px;background:#464646"></div>
<div class="abs" style="left:1114px;top:76px;width:67px;height:28px;background:#535353"></div>
<div class="abs" style="left:1181px;top:76px;width:1px;height:28px;background:#3e3e3e"></div>
<div class="abs" style="left:1238px;top:76px;width:1px;height:27px;background:#424242"></div>
<span class="abs" style="left:1124px;top:83.6px;font-size:10.4px;font-weight:bold;color:#f0f0f0;line-height:13px;white-space:nowrap;transform-origin:0 0;transform:scaleX(0.93)">Properties</span>
<span class="abs" style="left:1190px;top:83.6px;font-size:10.4px;font-weight:bold;color:#b0b0b0;line-height:13px;white-space:nowrap;transform-origin:0 0;transform:scaleX(0.95)">Libraries</span>
<!-- scrollbar -->
<div class="abs" style="left:1353px;top:104px;width:13px;height:623px;background:#4b4b4b"></div>
<div class="abs" style="left:1354px;top:116px;width:10px;height:467px;background:#606060;border-radius:4px"></div>
<svg class="abs chev" style="left:1354px;top:107px;opacity:.7"><use href="#chu"/></svg>
<svg class="abs chev" style="left:1354px;top:717px;opacity:.7"><use href="#chv"/></svg>
<!-- separators -->
<div class="abs hs" style="top:136px"></div><div class="abs hs" style="top:262px"></div><div class="abs hs" style="top:433px"></div><div class="abs hs" style="top:591px"></div><div class="abs hs" style="top:675px"></div>
<!-- section labels -->
<span class="lbl t sec" style="left:1125px;top:116px">Type</span>
<span class="lbl t sec" style="left:1125px;top:149px">Transform</span>
<span class="lbl t sec" style="left:1125px;top:274px">Appearance</span>
<span class="lbl t sec" style="left:1125px;top:446px">Character</span>
<span class="lbl t sec" style="left:1125px;top:603px">Paragraph</span>
<span class="lbl t sec" style="left:1125px;top:683px;color:#f0f0f0;-webkit-text-stroke:.45px #f0f0f0;transform:scaleX(.9)">Bullets And Numbering</span>
<!-- transform -->
<svg class="abs" style="left:1125px;top:182px" width="19.4" height="19.4" viewBox="0 0 21 21"><g fill="none" stroke="#c8c8c8" stroke-width="1"><rect x="1" y="1" width="4.6" height="4.6"/><rect x="8.2" y="1" width="4.6" height="4.6"/><rect x="15.4" y="1" width="4.6" height="4.6"/><rect x="1" y="8.2" width="4.6" height="4.6"/><rect x="15.4" y="8.2" width="4.6" height="4.6"/><rect x="1" y="15.4" width="4.6" height="4.6"/><rect x="8.2" y="15.4" width="4.6" height="4.6"/><rect x="15.4" y="15.4" width="4.6" height="4.6"/><path d="M5.6 3.3 H8.2 M12.8 3.3 H15.4 M5.6 17.7 H8.2 M12.8 17.7 H15.4 M3.3 5.6 V8.2 M3.3 12.8 V15.4 M17.7 5.6 V8.2 M17.7 12.8 V15.4"/></g><rect x="7.8" y="7.8" width="5.4" height="5.4" fill="#f0f0f0"/></svg>
<span class="lbl t b" style="left:1155px;top:173px">X:</span>
<div class="fld pf" style="left:1170px;top:169px;width:54px;height:19px;overflow:hidden"><span class="t n">278.2798 p</span></div>
<span class="lbl t b" style="left:1155px;top:199px">Y:</span>
<div class="fld pf" style="left:1170px;top:195px;width:54px;height:19px;overflow:hidden"><span class="t n">222.7705 p</span></div>
<span class="lbl t b" style="left:1240px;top:173px">W:</span>
<div class="fld pf" style="left:1259px;top:169px;width:55px;height:19px;overflow:hidden"><span class="t n">401.7588 p</span></div>
<span class="lbl t b" style="left:1241px;top:199px">H:</span>
<div class="fld pf" style="left:1259px;top:195px;width:55px;height:19px;overflow:hidden"><span class="t n">80.0586 pt</span></div>
<svg class="abs" style="left:1328px;top:184px" width="16" height="17" viewBox="0 0 16 17"><g fill="none" stroke="#c8c8c8" stroke-width="1.6"><path d="M5.4 6.6 V4.6 Q5.4 1.4 8.2 1.4 Q11 1.4 11 4.6 V6.4"/><path d="M11 10.4 V12.4 Q11 15.6 8.2 15.6 Q5.4 15.6 5.4 12.4 V10.6"/><path d="M1.6 1.6 L14.6 15.2"/></g></svg>
<svg class="abs" style="left:1149.5px;top:223px" width="14" height="10" viewBox="0 0 14 10"><path d="M7.6 1.2 L1 8.4 H10.2 Z" fill="none" stroke="#c8c8c8" stroke-width="1.3" stroke-linejoin="round"/><rect x="12" y="3.6" width="1.3" height="1.3" fill="#c8c8c8"/><rect x="12" y="7.2" width="1.3" height="1.3" fill="#c8c8c8"/></svg>
<div class="fld pf" style="left:1168px;top:221px;width:37px;height:19px"><span class="t" style="left:3px">0°</span></div>
<div class="abs dd" style="left:1205px;top:221px;width:18px;height:19px"></div>
<svg class="abs chev" style="left:1209px;top:227px"><use href="#chv"/></svg>
<svg class="abs" style="left:1265px;top:226px" width="15" height="12" viewBox="0 0 15 12"><path d="M0.6 1.4 L5.4 6 L0.6 10.6 Z" fill="none" stroke="#c8c8c8" stroke-width="1.1"/><path d="M14.4 1 L9 6 L14.4 11 Z" fill="#c8c8c8"/><path d="M7.2 0 V12" stroke="#c8c8c8" stroke-width="1" stroke-dasharray="1.2 1.2"/></svg>
<svg class="abs" style="left:1290px;top:225px" width="13" height="14" viewBox="0 0 13 14"><path d="M1.4 0.6 L6.5 5.4 L11.6 0.6 Z" fill="#c8c8c8"/><path d="M1.4 13.4 L6.5 8.6 L11.6 13.4 Z" fill="none" stroke="#c8c8c8" stroke-width="1.1"/><path d="M0 7 H13" stroke="#c8c8c8" stroke-width="1" stroke-dasharray="1.2 1.2"/></svg>
<svg class="abs dots" style="left:1332px;top:250px"><use href="#dots"/></svg>
<!-- appearance -->
<div class="abs" style="left:1125px;top:299px;width:18px;height:18px;background:#000;border:1px solid #e0e0e0"></div>
<span class="lbl t" style="left:1155px;top:303px">Fill</span>
<svg class="abs" style="left:1125px;top:328px" width="18" height="18" viewBox="0 0 18 18"><rect x="0" y="0" width="18" height="18" fill="#fff"/><rect x="4.5" y="4.5" width="9" height="9" fill="#4a4a4a" stroke="#1e1e1e" stroke-width="1"/><path d="M0.8 17.2 L17.2 0.8" stroke="#e0141a" stroke-width="2"/></svg>
<span class="lbl t ul" style="left:1155px;top:332px">Stroke</span>
<div class="abs dd" style="left:1205px;top:327px;width:16px;height:19px"></div>
<svg class="abs chev" style="left:1208.5px;top:329px"><use href="#chu"/></svg>
<svg class="abs chev" style="left:1208.5px;top:338px"><use href="#chv"/></svg>
<div class="fld pf" style="left:1223px;top:327px;width:32px;height:19px"></div>
<div class="abs dd" style="left:1255px;top:327px;width:17px;height:19px"></div>
<svg class="abs chev" style="left:1259px;top:333px"><use href="#chv"/></svg>
<svg class="abs" style="left:1125px;top:358px" width="17" height="17" viewBox="0 0 17 17"><rect x="0.5" y="0.5" width="16" height="16" fill="#5e5e5e" stroke="#909090" stroke-width="1"/><g fill="#787878"><rect x="1" y="1" width="3.75" height="3.75"/><rect x="8.5" y="1" width="3.75" height="3.75"/><rect x="4.75" y="4.75" width="3.75" height="3.75"/><rect x="12.25" y="4.75" width="3.75" height="3.75"/><rect x="1" y="8.5" width="3.75" height="3.75"/><rect x="8.5" y="8.5" width="3.75" height="3.75"/><rect x="4.75" y="12.25" width="3.75" height="3.75"/><rect x="12.25" y="12.25" width="3.75" height="3.75"/></g></svg>
<span class="lbl t ul" style="left:1155px;top:361px">Opacity</span>
<div class="fld pf" style="left:1204px;top:356px;width:51px;height:19px"><span class="t n" style="left:4px">100%</span></div>
<div class="abs dd" style="left:1255px;top:356px;width:17px;height:19px"></div>
<svg class="abs" style="left:1260px;top:361px" width="8" height="10" viewBox="0 0 8 10"><path d="M2 1 L6 5 L2 9" fill="none" stroke="#e6e6e6" stroke-width="1.5"/></svg>
<span class="abs" style="left:1131px;top:391px;font-size:15px;font-style:italic;color:#c4c4c4;line-height:18px;transform-origin:0 0;transform:scaleX(.9)">fx<span style="font-size:9px">.</span></span>
<svg class="abs dots" style="left:1332px;top:422px"><use href="#dots"/></svg>
<!-- character -->
<div class="fld pf" style="left:1125px;top:471px;width:202px;height:19px"><span class="t" style="left:27px">Myriad Pro*</span></div>
<svg class="abs" style="left:1128px;top:474px" width="20" height="14" viewBox="0 0 20 14"><circle cx="5" cy="5" r="3.6" fill="none" stroke="#c8c8c8" stroke-width="1.3"/><path d="M7.6 7.8 L11 11.5" stroke="#c8c8c8" stroke-width="1.5"/><path d="M11.5 5 L14 7.5 L16.5 5" fill="none" stroke="#c8c8c8" stroke-width="1.1"/></svg>
<div class="abs dd" style="left:1327px;top:471px;width:17px;height:19px"></div>
<svg class="abs chev" style="left:1331px;top:477px"><use href="#chv"/></svg>
<div class="fld pf" style="left:1125px;top:497px;width:202px;height:19px"><span class="t" style="left:6px">Regular</span></div>
<div class="abs dd" style="left:1327px;top:497px;width:17px;height:19px"></div>
<svg class="abs chev" style="left:1331px;top:503px"><use href="#chv"/></svg>
<!-- size row -->
<span class="abs" style="left:1125px;top:520px;font-family:'Liberation Serif',serif;font-weight:bold;color:#cfcfcf;line-height:22px;white-space:nowrap;-webkit-text-stroke:.3px #cfcfcf"><span style="font-size:13px">T</span><span style="font-size:18.5px;margin-left:-2.5px">T</span></span>
<div class="abs dd" style="left:1148px;top:523px;width:16px;height:19px"></div>
<svg class="abs chev" style="left:1151.5px;top:525px"><use href="#chu"/></svg><svg class="abs chev" style="left:1151.5px;top:534px"><use href="#chv"/></svg>
<div class="fld pf" style="left:1164px;top:523px;width:45px;height:19px;overflow:hidden"><span class="t" style="left:4px">73.65 pt</span></div>
<div class="abs dd" style="left:1209px;top:523px;width:18px;height:19px"></div>
<svg class="abs chev" style="left:1213px;top:529px"><use href="#chv"/></svg>
<svg class="abs" style="left:1241px;top:523px" width="20" height="18" viewBox="0 0 20 18"><g fill="none" stroke="#cfcfcf" stroke-width="1.1"><path d="M9.4 7.4 L12.8 0.8 L16.2 7.4 M10.6 5.2 H15"/><path d="M9.4 16.8 L12.8 10.2 L16.2 16.8 M10.6 14.6 H15"/><path d="M4 2.6 V15.4 M1.4 5 L4 2.4 L6.6 5 M1.4 13 L4 15.6 L6.6 13"/></g></svg>
<div class="abs dd" style="left:1265px;top:523px;width:16px;height:19px"></div>
<svg class="abs chev" style="left:1268.5px;top:525px"><use href="#chu"/></svg><svg class="abs chev" style="left:1268.5px;top:534px"><use href="#chv"/></svg>
<div class="fld pf" style="left:1281px;top:523px;width:46px;height:19px;overflow:hidden"><span class="t" style="left:3px">(88.38 pt</span></div>
<div class="abs dd" style="left:1327px;top:523px;width:17px;height:19px"></div>
<svg class="abs chev" style="left:1331px;top:529px"><use href="#chv"/></svg>
<!-- kerning row -->
<svg class="abs" style="left:1125px;top:548px" width="20" height="18" viewBox="0 0 20 18"><g fill="none" stroke="#cfcfcf" stroke-width="1.2"><path d="M0.6 1.4 L4.4 11 L8.2 1.4"/><path d="M8.6 11 L12.6 1.4 L16.6 11 M10 8 H15.2"/><path d="M10.4 0.6 L5.6 12"/><path d="M4 15 H15 M6.4 12.8 L4 15 L6.4 17.2"/></g></svg>
<div class="abs dd" style="left:1148px;top:548px;width:16px;height:19px"></div>
<svg class="abs chev" style="left:1151.5px;top:550px"><use href="#chu"/></svg><svg class="abs chev" style="left:1151.5px;top:559px"><use href="#chv"/></svg>
<div class="fld pf" style="left:1164px;top:548px;width:45px;height:19px"><span class="t" style="left:4px">Auto</span></div>
<div class="abs dd" style="left:1209px;top:548px;width:18px;height:19px"></div>
<svg class="abs chev" style="left:1213px;top:554px"><use href="#chv"/></svg>
<svg class="abs" style="left:1242px;top:548px" width="19" height="18" viewBox="0 0 19 18"><rect x="0.4" y="0.4" width="18" height="11.4" fill="#cfcfcf"/><g fill="none" stroke="#535353" stroke-width="1.3"><path d="M2.4 2.4 L5.6 9.8 L8.8 2.4"/><path d="M9.8 9.8 L13 2.4 L16.2 9.8 M11 7.4 H15"/></g><path d="M1 15 H18 M3.4 12.8 L1 15 L3.4 17.2 M15.6 12.8 L18 15 L15.6 17.2" fill="none" stroke="#cfcfcf" stroke-width="1.1"/></svg>
<div class="abs dd" style="left:1265px;top:548px;width:16px;height:19px"></div>
<svg class="abs chev" style="left:1268.5px;top:550px"><use href="#chu"/></svg><svg class="abs chev" style="left:1268.5px;top:559px"><use href="#chv"/></svg>
<div class="fld pf" style="left:1281px;top:548px;width:46px;height:19px"><span class="t" style="left:4px">0</span></div>
<div class="abs dd" style="left:1327px;top:548px;width:17px;height:19px"></div>
<svg class="abs chev" style="left:1331px;top:554px"><use href="#chv"/></svg>
<svg class="abs dots" style="left:1332px;top:580px"><use href="#dots"/></svg>
<!-- paragraph -->
<div class="abs" style="left:1126px;top:628px;width:24px;height:23px;background:#2f2f2f;border-radius:2px"></div>
<svg class="abs" style="left:1126px;top:628px" width="210" height="23" viewBox="0 0 210 23"><g stroke="#c8c8c8" stroke-width="1.1" fill="none">
<path d="M5 5.4 H17 M5 8.5 H20 M5 11.6 H17 M5 14.6 H20 M5 17.6 H17" stroke="#f4f4f4"/>
<path d="M37 5.4 H49 M35 8.5 H51.3 M37 11.6 H49 M35 14.6 H51.3 M37 17.6 H49"/>
<path d="M69 5.4 H81 M66 8.5 H81 M69 11.6 H81 M66 14.6 H81 M69 17.6 H81"/>
<path d="M98 5.4 H112 M98 8.5 H112 M98 11.6 H112 M98 14.6 H112 M98 17.6 H108"/>
<path d="M128.4 5.4 H142.4 M128.4 8.5 H142.4 M128.4 11.6 H142.4 M128.4 14.6 H142.4 M131 17.6 H140"/>
<path d="M159.8 5.4 H173.8 M159.8 8.5 H173.8 M159.8 11.6 H173.8 M159.8 14.6 H173.8 M163.8 17.6 H173.8"/>
<path d="M190.9 5.4 H204.9 M190.9 8.5 H204.9 M190.9 11.6 H204.9 M190.9 14.6 H204.9 M190.9 17.6 H204.9"/>
</g></svg>
<svg class="abs dots" style="left:1332px;top:664px"><use href="#dots"/></svg>
<!-- bullets -->
<svg class="abs" style="left:1131px;top:712px" width="66" height="16" viewBox="0 0 66 16"><g fill="#c8c8c8"><circle cx="2" cy="3" r="1.7"/><circle cx="2" cy="9" r="1.7"/><circle cx="2" cy="15" r="1.7"/></g><path d="M5.5 3 H15 M5.5 9 H15 M5.5 15 H15" stroke="#c8c8c8" stroke-width="1.3"/><path d="M20.5 6.5 L24 10 L27.5 6.5" fill="none" stroke="#d8d8d8" stroke-width="1.4"/><path d="M41.5 3 H51 M41.5 9 H51 M41.5 15 H51" stroke="#c8c8c8" stroke-width="1.3"/><path d="M37 0.6 L38.2 0 V5.4 M36.4 9.2 Q38 7.6 39.2 8.8 Q40 10 36.4 13.6 H39.8" fill="none" stroke="#c8c8c8" stroke-width="1"/><path d="M56 6.5 L59.500 10 L63 6.5" fill="none" stroke="#d8d8d8" stroke-width="1.4"/></svg>
<div id="ctx" class="abs"></div>
<span class="ci" style="left:557px;top:166px;color:#151515">Cut</span>
<span class="cs" style="right:559px;top:166px;color:#151515">Ctrl+X</span>
<span class="ci" style="left:557px;top:188px;color:#151515">Copy</span>
<span class="cs" style="right:559px;top:188px;color:#151515">Ctrl+C</span>
<span class="ci" style="left:557px;top:210px;color:#151515">Paste</span>
<span class="cs" style="right:559px;top:210px;color:#151515">Ctrl+V</span>
<span class="ci" style="left:557px;top:232px;color:#151515">Paste...</span>
<svg class="abs" style="left:811px;top:235px" width="6" height="10" viewBox="0 0 6 10"><path d="M1 1 L5 5 L1 9" fill="none" stroke="#333" stroke-width="1.2"/></svg>
<div class="abs" style="left:553px;top:254px;width:271px;height:1px;background:#d4d4d4"></div>
<span class="ci" style="left:557px;top:261px;color:#151515">Snap to Glyph [i]</span>
<div class="abs" style="left:553px;top:283px;width:271px;height:1px;background:#d4d4d4"></div>
<span class="ci" style="left:557px;top:290px;color:#151515">Undo Move</span>
<span class="cs" style="right:559px;top:290px;color:#151515">Ctrl+Z</span>
<span class="ci" style="left:557px;top:312px;color:#707070">Redo</span>
<span class="cs" style="right:559px;top:312px;color:#707070">Shift+Ctrl+Z</span>
<div class="abs" style="left:553px;top:334px;width:271px;height:1px;background:#d4d4d4"></div>
<span class="ci" style="left:557px;top:341px;color:#151515">Font</span>
<svg class="abs" style="left:811px;top:344px" width="6" height="10" viewBox="0 0 6 10"><path d="M1 1 L5 5 L1 9" fill="none" stroke="#333" stroke-width="1.2"/></svg>
<span class="ci" style="left:557px;top:363px;color:#151515">Recent Fonts</span>
<svg class="abs" style="left:811px;top:366px" width="6" height="10" viewBox="0 0 6 10"><path d="M1 1 L5 5 L1 9" fill="none" stroke="#333" stroke-width="1.2"/></svg>
<span class="ci" style="left:557px;top:385px;color:#151515">Size</span>
<svg class="abs" style="left:811px;top:388px" width="6" height="10" viewBox="0 0 6 10"><path d="M1 1 L5 5 L1 9" fill="none" stroke="#333" stroke-width="1.2"/></svg>
<div class="abs" style="left:553px;top:407px;width:271px;height:1px;background:#d4d4d4"></div>
<div class="abs" style="left:523px;top:411px;width:304px;height:22px;background:#8fc7f6"></div>
<span class="ci" style="left:557px;top:414px;color:#151515">Create Outlines</span>
<span class="cs" style="right:559px;top:414px;color:#151515">Shift+Ctrl+O</span>
<div class="abs" style="left:553px;top:436px;width:271px;height:1px;background:#d4d4d4"></div>
<span class="ci" style="left:557px;top:443px;color:#151515">Spelling</span>
<svg class="abs" style="left:811px;top:446px" width="6" height="10" viewBox="0 0 6 10"><path d="M1 1 L5 5 L1 9" fill="none" stroke="#333" stroke-width="1.2"/></svg>
<div class="abs" style="left:553px;top:465px;width:271px;height:1px;background:#d4d4d4"></div>
<span class="ci" style="left:557px;top:472px;color:#151515">Bullets and Numbering</span>
<svg class="abs" style="left:811px;top:475px" width="6" height="10" viewBox="0 0 6 10"><path d="M1 1 L5 5 L1 9" fill="none" stroke="#333" stroke-width="1.2"/></svg>
<div class="abs" style="left:553px;top:494px;width:271px;height:1px;background:#d4d4d4"></div>
<span class="ci" style="left:557px;top:501px;color:#151515">Insert Special Character</span>
<svg class="abs" style="left:811px;top:504px" width="6" height="10" viewBox="0 0 6 10"><path d="M1 1 L5 5 L1 9" fill="none" stroke="#333" stroke-width="1.2"/></svg>
<span class="ci" style="left:557px;top:523px;color:#151515">Insert WhiteSpace Character</span>
<svg class="abs" style="left:811px;top:526px" width="6" height="10" viewBox="0 0 6 10"><path d="M1 1 L5 5 L1 9" fill="none" stroke="#333" stroke-width="1.2"/></svg>
<span class="ci" style="left:557px;top:545px;color:#151515">Insert Break Character</span>
<svg class="abs" style="left:811px;top:548px" width="6" height="10" viewBox="0 0 6 10"><path d="M1 1 L5 5 L1 9" fill="none" stroke="#333" stroke-width="1.2"/></svg>
<span class="ci" style="left:557px;top:567px;color:#151515">Fill With PlaceHolder Text</span>
<div class="abs" style="left:553px;top:589px;width:271px;height:1px;background:#d4d4d4"></div>
<span class="ci" style="left:557px;top:596px;color:#151515">Transform</span>
<svg class="abs" style="left:811px;top:599px" width="6" height="10" viewBox="0 0 6 10"><path d="M1 1 L5 5 L1 9" fill="none" stroke="#333" stroke-width="1.2"/></svg>
<span class="ci" style="left:557px;top:618px;color:#151515">Arrange</span>
<svg class="abs" style="left:811px;top:621px" width="6" height="10" viewBox="0 0 6 10"><path d="M1 1 L5 5 L1 9" fill="none" stroke="#333" stroke-width="1.2"/></svg>
<span class="ci" style="left:557px;top:640px;color:#151515">Select</span>
<svg class="abs" style="left:811px;top:643px" width="6" height="10" viewBox="0 0 6 10"><path d="M1 1 L5 5 L1 9" fill="none" stroke="#333" stroke-width="1.2"/></svg>
<span class="ci" style="left:557px;top:662px;color:#151515">Add to Library</span>
<span class="ci" style="left:557px;top:684px;color:#151515">Collect For Export</span>
<svg class="abs" style="left:811px;top:687px" width="6" height="10" viewBox="0 0 6 10"><path d="M1 1 L5 5 L1 9" fill="none" stroke="#333" stroke-width="1.2"/></svg>
<span class="ci" style="left:557px;top:706px;color:#151515">Export Selection...</span>
<!-- annotation overlay -->
<svg class="abs" style="left:0;top:0" width="1366" height="727" viewBox="0 0 1366 727">
<defs><filter id="sh" x="-5%" y="-30%" width="110%" height="170%"><feGaussianBlur stdDeviation="1.6"/></filter></defs>
<rect x="520" y="411" width="311" height="26" fill="none" stroke="#000" stroke-opacity=".45" stroke-width="3" filter="url(#sh)"/>
<rect x="520.5" y="410.5" width="309" height="23" fill="none" stroke="#e3141c" stroke-width="3"/>
<path d="M351.6 247.6 L509 406.7" stroke="#e02a2e" stroke-width="1.15" fill="none"/>
<path d="M515.8 413.6 L501.6 407.4 L508.8 400.8 Z" fill="#e3141c"/>
<!-- cursor -->
<path d="M630.5 425.5 V439.5 L633.7 436.6 L636.2 442 L638.4 441 L636 435.8 L640.4 435.6 Z" fill="#fff" stroke="#000" stroke-width="1" stroke-linejoin="round"/>
</svg>
<span class="abs" id="annot" style="left:193px;top:213.5px;font-size:15px;font-weight:bold;color:#e01f22;line-height:18px;white-space:nowrap;text-shadow:-1px -1px 0 #fff,1px -1px 0 #fff,-1px 1px 0 #fff,1px 1px 0 #fff,0 0 2px #fff,0 0 2px #fff,1.5px 2px 3px rgba(0,0,0,.45);transform-origin:0 0;transform:scaleX(.982)">Công cụ biến chữ thành đối tượng hình</span>
<span class="abs" id="wm1" style="left:1073px;top:650px;font-size:19.5px;color:rgba(255,255,255,.35);line-height:24px;white-space:nowrap;transform-origin:0 0;transform:scaleX(1.013)">Activate Windows</span>
<span class="abs" id="wm2" style="left:1073px;top:675px;font-size:15px;color:rgba(255,255,255,.35);line-height:19px;white-space:nowrap;transform-origin:0 0;transform:scaleX(.99)">Go to Settings to activate Windows.</span>
</div>
</body>
</html>
